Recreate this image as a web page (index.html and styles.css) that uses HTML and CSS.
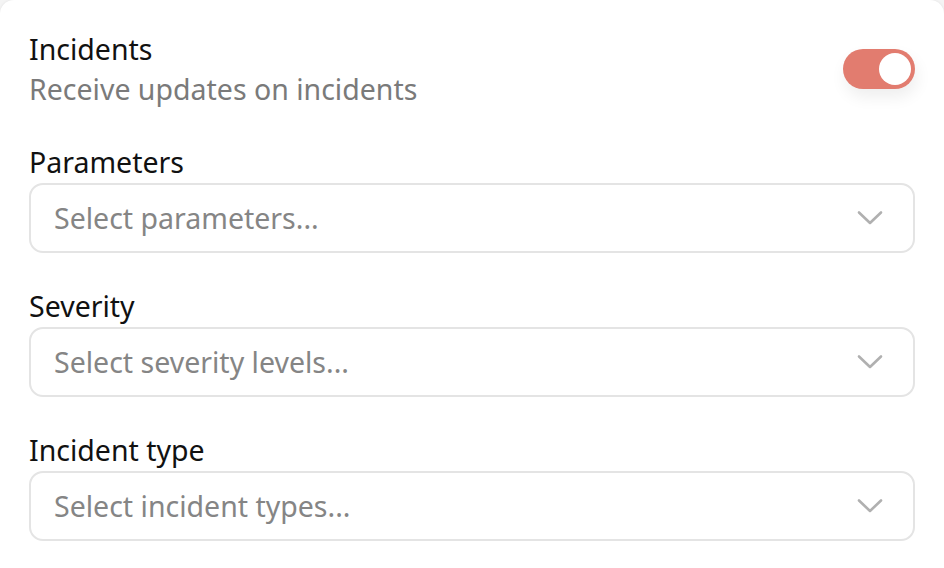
FILE: index.html
```html
<!DOCTYPE html>
<html lang="en">
<head>
<meta charset="utf-8">
<title>Incidents</title>
<link rel="stylesheet" href="styles.css">
</head>
<body>
<div class="card">
  <div class="header">
    <div class="header-text">
      <div class="title">Incidents</div>
      <div class="subtitle">Receive updates on incidents</div>
    </div>
    <div class="toggle" role="switch" aria-checked="true"><span class="knob"></span></div>
  </div>

  <div class="field">
    <div class="label">Parameters</div>
    <div class="select">
      <span class="placeholder">Select parameters...</span>
      <svg class="chevron" width="26" height="16" viewBox="0 0 26 16"><path d="M2 2.5 L13 13 L24 2.5" fill="none" stroke="#b0b0b0" stroke-width="2.6" stroke-linecap="round" stroke-linejoin="round"/></svg>
    </div>
  </div>

  <div class="field">
    <div class="label">Severity</div>
    <div class="select">
      <span class="placeholder">Select severity levels...</span>
      <svg class="chevron" width="26" height="16" viewBox="0 0 26 16"><path d="M2 2.5 L13 13 L24 2.5" fill="none" stroke="#b0b0b0" stroke-width="2.6" stroke-linecap="round" stroke-linejoin="round"/></svg>
    </div>
  </div>

  <div class="field">
    <div class="label">Incident type</div>
    <div class="select">
      <span class="placeholder">Select incident types...</span>
      <svg class="chevron" width="26" height="16" viewBox="0 0 26 16"><path d="M2 2.5 L13 13 L24 2.5" fill="none" stroke="#b0b0b0" stroke-width="2.6" stroke-linecap="round" stroke-linejoin="round"/></svg>
    </div>
  </div>
</div>
</body>
</html>
```

FILE: styles.css
```css
html, body {
  margin: 0;
  padding: 0;
  background: #f4f4f4;
}

body {
  font-family: "Noto Sans", "Open Sans", sans-serif;
  width: 944px;
  height: 568px;
  overflow: hidden;
}

.card {
  background: #ffffff;
  border-radius: 14px 14px 0 0;
  height: 568px;
  box-sizing: border-box;
  padding: 30px 29px 0 29px;
  box-shadow: 0 0 3px rgba(0, 0, 0, 0.08);
}

.header {
  display: flex;
  justify-content: space-between;
  align-items: center;
  margin-bottom: 35px;
}

.title {
  font-size: 28.5px;
  line-height: 38px;
  color: #111111;
}

.subtitle {
  font-size: 28.5px;
  line-height: 38px;
  margin-top: 2px;
  color: #7a7a7a;
}

.toggle {
  width: 72px;
  height: 40px;
  border-radius: 20px;
  background: #e27c6f;
  box-sizing: border-box;
  padding: 4px;
  display: flex;
  justify-content: flex-end;
  box-shadow: 2px 8px 16px rgba(0, 0, 0, 0.07);
}

.knob {
  width: 32px;
  height: 32px;
  border-radius: 50%;
  background: #ffffff;
}

.field {
  margin-bottom: 34px;
}

.label {
  font-size: 28.5px;
  line-height: 38px;
  color: #111111;
  margin-bottom: 2px;
}

.select {
  height: 70px;
  box-sizing: border-box;
  border: 2px solid #e4e4e4;
  border-radius: 14px;
  display: flex;
  align-items: center;
  justify-content: space-between;
  padding: 0 30px 0 23px;
}

.placeholder {
  font-size: 28.5px;
  color: #858585;
}

.chevron {
  display: block;
}
```
